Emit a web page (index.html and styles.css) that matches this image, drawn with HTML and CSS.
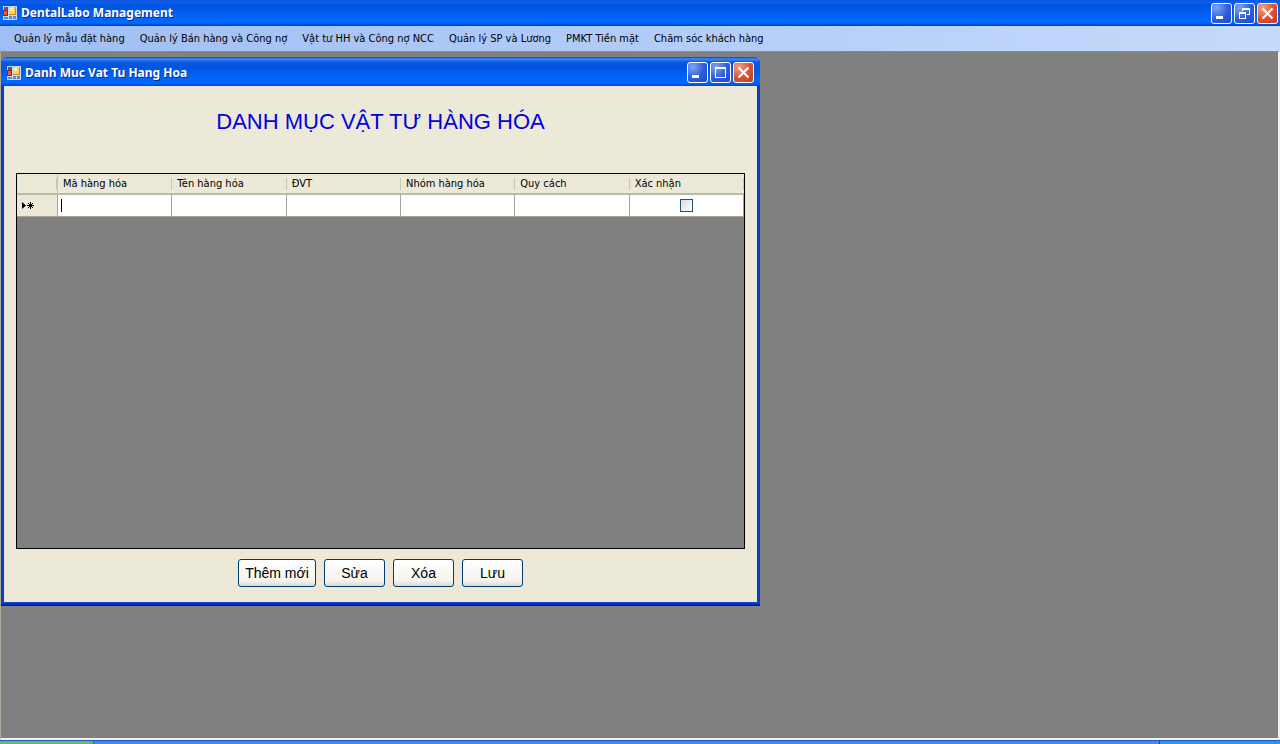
FILE: index.html
```html
<!DOCTYPE html>
<html lang="vi">
<head>
<meta charset="utf-8">
<title>DentalLabo Management</title>
<link rel="stylesheet" href="styles.css">
</head>
<body>
<svg class="defs" aria-hidden="true">
  <symbol id="app" viewBox="0 0 14 14">
    <path fill="#c9d8ee" d="M0 0h14v14H0z"/>
    <path fill="#2c62b8" d="M1 1h4v3H1z"/>
    <path fill="#5c8cd0" d="M1 11h4v2H1zM6 10h3v3H6zM10 10h3v3h-3z"/>
    <path fill="#a81c08" d="M0 4h5v6H0z"/>
    <path fill="#ee5a38" d="M1 5h3v4H1z"/>
    <path fill="#c98a10" d="M6 1h7v8H6z"/>
    <path fill="#ffd45c" d="M6 1h6v7H6z"/>
    <path fill="#fff0a8" d="M7 2h3v3H7z"/>
  </symbol>
  <symbol id="min" viewBox="0 0 21 21"><path fill="#fff" d="M5 13h7v3H5z"/></symbol>
  <symbol id="max" viewBox="0 0 21 21"><path fill="#fff" fill-rule="evenodd" d="M5 5h11v11H5zM6 7v8h9V7z"/></symbol>
  <symbol id="restore" viewBox="0 0 21 21"><path fill="#fff" fill-rule="evenodd" d="M5 9h7v7H5zM6 11v4h5v-4zM8 5h8v7h-3v-1h2V7H9v1H8z"/></symbol>
  <symbol id="close" viewBox="0 0 21 21"><path fill="none" stroke="#fff" stroke-width="2" d="M5.500 5.500l10 10M15.500 5.500l-10 10"/></symbol>
</svg>

<header class="titlebar">
  <svg class="app-icon"><use href="#app"/></svg>
  <h1 class="caption">DentalLabo Management</h1>
  <div class="controls">
    <button class="control" aria-label="Minimize"><svg><use href="#min"/></svg></button>
    <button class="control" aria-label="Restore"><svg><use href="#restore"/></svg></button>
    <button class="control control-close" aria-label="Close"><svg><use href="#close"/></svg></button>
  </div>
</header>

<nav class="menu">
  <a href="#">Quản lý mẫu đặt hàng</a>
  <a href="#">Quản lý Bán hàng và Công nợ</a>
  <a href="#">Vật tư HH và Công nợ NCC</a>
  <a href="#">Quản lý SP và Lương</a>
  <a href="#">PMKT Tiền mặt</a>
  <a href="#">Chăm sóc khách hàng</a>
</nav>

<main class="workspace">
  <section class="window">
    <div class="titlebar titlebar-child">
      <svg class="app-icon"><use href="#app"/></svg>
      <h2 class="caption">Danh Muc Vat Tu Hang Hoa</h2>
      <div class="controls">
        <button class="control" aria-label="Minimize"><svg><use href="#min"/></svg></button>
        <button class="control" aria-label="Maximize"><svg><use href="#max"/></svg></button>
        <button class="control control-close" aria-label="Close"><svg><use href="#close"/></svg></button>
      </div>
    </div>
    <form class="form">
      <h3 class="heading">DANH MỤC VẬT TƯ HÀNG HÓA</h3>
      <div class="grid">
        <table>
          <thead>
            <tr><th class="marker"></th><th>Mã hàng hóa</th><th>Tên hàng hóa</th><th>ĐVT</th><th>Nhóm hàng hóa</th><th>Quy cách</th><th>Xác nhận</th></tr>
          </thead>
          <tbody>
            <tr>
              <th class="marker" scope="row"><svg class="new-row" viewBox="0 0 12 9"><path fill="#000" d="M0 1l4 3.500L0 8z"/><path stroke="#000" d="M8.500 1v7M5 4.500h7M6 2l5 5M11 2L6 7"/></svg></th>
              <td><span class="caret"></span></td><td></td><td></td><td></td><td></td>
              <td class="confirm"><input type="checkbox" aria-label="Xác nhận"></td>
            </tr>
          </tbody>
        </table>
      </div>
      <div class="actions">
        <button type="button" class="action action-wide">Thêm mới</button>
        <button type="button" class="action">Sửa</button>
        <button type="button" class="action">Xóa</button>
        <button type="button" class="action">Lưu</button>
      </div>
    </form>
  </section>
</main>
<footer class="taskbar"><span class="start"></span><span class="tray"></span></footer>
</body>
</html>
```
FILE: styles.css
```css
* { box-sizing: border-box; }
body {
  margin: 0;
  min-height: 100vh;
  display: flex;
  flex-direction: column;
  background: #808080;
  color: #000;
  font-family: "DejaVu Sans Condensed", "DejaVu Sans", sans-serif;
  font-size: 11px;
}
.defs { position: absolute; width: 0; height: 0; }

.titlebar {
  height: 26px;
  padding: 0 2px 0 3px;
  display: flex;
  align-items: center;
  background: linear-gradient(#0a50d8 0, #0f62ee 2px, #0054e0 5px, #0058ea 10px, #0068ff 19px, #0066fc 23px, #0040c0 100%);
}
.titlebar-child {
  height: 29px;
  padding: 2px 6px 0 6px;
  border-radius: 6px 6px 0 0;
  background: linear-gradient(#0842c0 0, #3a8cfc 2px, #0a5ae4 5px, #0054e0 10px, #0064fa 20px, #0066fc 26px, #0048d0 100%);
}
.app-icon { width: 14px; height: 14px; }
.caption {
  flex: 1;
  margin: 0 0 0 4px;
  color: #fff;
  font-family: "Noto Sans", sans-serif;
  font-size: 12px;
  line-height: 18px;
  font-weight: 700;
  text-shadow: 1px 1px 0 #0a2a88;
}
.controls { display: flex; gap: 2px; }
.control {
  width: 21px;
  height: 21px;
  padding: 0;
  border: 1px solid #fff;
  border-radius: 3px;
  background: radial-gradient(circle at 25% 20%, #7ca4f4, #2c5cdc 55%, #1c48d0);
}
.control-close { background: radial-gradient(circle at 25% 20%, #f0a088, #dc5030 55%, #c43c18); }
.control svg { display: block; width: 21px; height: 21px; margin: -1px; }

.menu {
  height: 25px;
  padding-left: 14px;
  display: flex;
  align-items: center;
  gap: 15px;
  background: linear-gradient(90deg, #9ebef5, #c6dafa);
}
.menu a { color: #000; text-decoration: none; white-space: nowrap; line-height: 16px; }

.workspace {
  flex: 1;
  padding: 5px 0 5px;
  border: solid;
  border-width: 1px 2px 2px 1px;
  border-color: #8c8c80 #f4f2e8 #f4f2e8 #aca899;
}
.window {
  width: 759px;
  max-width: 100%;
  border-radius: 6px 6px 0 0;
  background: #0a3cc8;
}
.form {
  margin: 0 3px;
  padding: 21px 12px 15px 11px;
  border-left: 1px solid #e0e4ec;
  background: #ece9d8;
}
.window::after { content: ""; display: block; height: 4px; background: linear-gradient(#0a50e0, #001490); }
.heading {
  margin: 0 0 36px;
  color: #0000e0;
  font-family: "Liberation Sans", Arial, sans-serif;
  font-size: 22px;
  line-height: 30px;
  font-weight: 400;
  text-align: center;
}
.grid { height: 376px; border: 1px solid #000; background: #808080; }
table { width: 100%; border-collapse: separate; border-spacing: 0; table-layout: fixed; }
th, td { padding: 0; text-align: left; font-weight: 400; }
th { background: #ece9d8; }
.marker { width: 41px; }
thead th {
  height: 21px;
  padding-left: 5px;
  border-bottom: 2px solid #bcb9a6;
  background: linear-gradient(#c8c5b4, #c8c5b4) right center / 1px 12px no-repeat #ece9d8;
}
thead .marker { border-right: 1px solid #c8c5b4; }
tbody th, td { height: 22px; border-bottom: 1px solid #a8a594; border-right: 1px solid #a8a594; }
td { background: #fff; }
.new-row { display: block; width: 12px; height: 9px; margin-left: 5px; }
.caret { display: block; width: 1px; height: 13px; margin-left: 3px; background: #000; }
.confirm { text-align: center; }
.confirm input {
  appearance: none;
  display: block;
  width: 13px;
  height: 13px;
  margin: 0 auto;
  border: 1px solid #1c5180;
  background: linear-gradient(135deg, #dcdcd7, #fff);
}
.actions { display: flex; justify-content: center; gap: 8px; margin-top: 10px; }
.action {
  width: 61px;
  height: 28px;
  padding: 0;
  border: 1px solid #003c74;
  border-radius: 3px;
  background: linear-gradient(#fff, #f4f3ee 80%, #dcd8cc);
  color: #000;
  font-family: "Liberation Sans", Arial, sans-serif;
  font-size: 14px;
}
.action-wide { width: 78px; }

.taskbar {
  height: 4px;
  display: flex;
  justify-content: space-between;
  border-top: 1px solid #1c58c8;
  background: #3c8cec;
}
.start { width: 94px; background: #6cb868; border-right: 1px solid #2c7848; }
.tray { width: 121px; background: #18a0ec; border-left: 1px solid #0c4ca0; }
```
